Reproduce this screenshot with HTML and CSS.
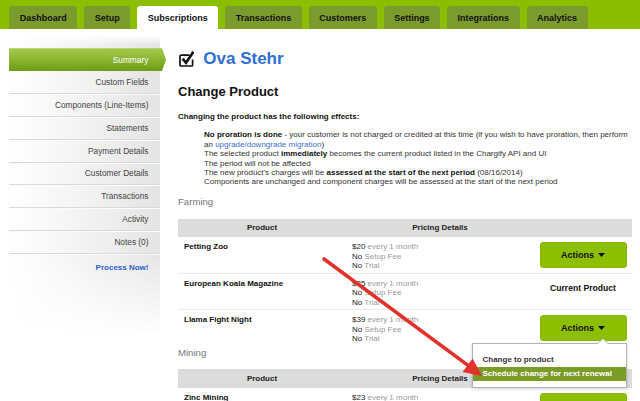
FILE: index.html
```html
<!DOCTYPE html>
<html lang="en">
<head>
<meta charset="utf-8">
<title>Change Product</title>
<link rel="stylesheet" href="styles.css">
</head>
<body>
<nav class="tabs">
  <a class="tab">Dashboard</a>
  <a class="tab">Setup</a>
  <a class="tab active">Subscriptions</a>
  <a class="tab">Transactions</a>
  <a class="tab">Customers</a>
  <a class="tab">Settings</a>
  <a class="tab">Integrations</a>
  <a class="tab">Analytics</a>
</nav>
<div class="layout">
  <aside class="sidebar">
    <ul class="side-nav">
      <li class="side-item active">Summary</li>
      <li class="side-item">Custom Fields</li>
      <li class="side-item">Components (Line-Items)</li>
      <li class="side-item">Statements</li>
      <li class="side-item">Payment Details</li>
      <li class="side-item">Customer Details</li>
      <li class="side-item">Transactions</li>
      <li class="side-item">Activity</li>
      <li class="side-item">Notes (0)</li>
      <li class="side-item process">Process Now!</li>
    </ul>
  </aside>
  <main class="content">
    <h1 class="customer">
      <svg class="check-icon" width="16" height="16" viewBox="0 0 16 16">
        <path d="M11.5 4.2H3a1 1 0 0 0-1 1V14a1 1 0 0 0 1 1h10.6a1 1 0 0 0 1-1V8.5" fill="none" stroke="#111" stroke-width="1.7"/>
        <path d="M4.6 7.6 L8 11.8 L15.4 0.8" fill="none" stroke="#111" stroke-width="2.6" stroke-linejoin="miter"/>
      </svg>
      <span>Ova Stehr</span>
    </h1>
    <h2 class="section-title">Change Product</h2>
    <p class="intro">Changing the product has the following effects:</p>
    <div class="effects">
      <div class="effect"><b>No proration is done</b> - your customer is not charged or credited at this time (if you wish to have proration, then perform<br>an <a class="link">upgrade/downgrade migration</a>)</div>
      <div class="effect">The selected product <b>immediately</b> becomes the current product listed in the Chargify API and UI</div>
      <div class="effect">The period will not be affected</div>
      <div class="effect">The new product's charges will be <b>assessed at the start of the next period</b> (08/16/2014)</div>
      <div class="effect">Components are unchanged and component charges will be assessed at the start of the next period</div>
    </div>

    <h3 class="family">Farming</h3>
    <table class="products">
      <colgroup><col class="col-product"><col class="col-pricing"><col class="col-actions"></colgroup>
      <thead>
        <tr class="head-row"><th>Product</th><th>Pricing Details</th><th></th></tr>
      </thead>
      <tbody>
        <tr class="row">
          <td class="name">Petting Zoo</td>
          <td class="pricing">
            <div><span class="val">$20</span> every 1 month</div>
            <div><span class="val">No</span> Setup Fee</div>
            <div><span class="val">No</span> Trial</div>
          </td>
          <td class="actions-cell"><span class="actions-wrap"><button class="btn">Actions <svg class="caret" width="7" height="4" viewBox="0 0 7 4"><path d="M0 0H7L3.5 4Z" fill="#111"/></svg></button></span></td>
        </tr>
        <tr class="row">
          <td class="name">European Koala Magazine</td>
          <td class="pricing">
            <div><span class="val">$35</span> every 1 month</div>
            <div><span class="val">No</span> Setup Fee</div>
            <div><span class="val">No</span> Trial</div>
          </td>
          <td class="actions-cell current">Current Product</td>
        </tr>
        <tr class="row last">
          <td class="name">Llama Fight Night</td>
          <td class="pricing">
            <div><span class="val">$39</span> every 1 month</div>
            <div><span class="val">No</span> Setup Fee</div>
            <div><span class="val">No</span> Trial</div>
          </td>
          <td class="actions-cell">
            <span class="actions-wrap">
              <button class="btn">Actions <svg class="caret" width="7" height="4" viewBox="0 0 7 4"><path d="M0 0H7L3.5 4Z" fill="#111"/></svg></button>
              <ul class="menu">
                <li class="menu-item">Change to product</li>
                <li class="menu-item selected">Schedule change for next renewal</li>
              </ul>
            </span>
          </td>
        </tr>
      </tbody>
    </table>

    <h3 class="family mining">Mining</h3>
    <table class="products">
      <colgroup><col class="col-product"><col class="col-pricing"><col class="col-actions"></colgroup>
      <thead>
        <tr class="head-row"><th>Product</th><th>Pricing Details</th><th></th></tr>
      </thead>
      <tbody>
        <tr class="row">
          <td class="name">Zinc Mining</td>
          <td class="pricing">
            <div><span class="val">$23</span> every 1 month</div>
          </td>
          <td class="actions-cell"><span class="actions-wrap"><button class="btn">Actions <svg class="caret" width="7" height="4" viewBox="0 0 7 4"><path d="M0 0H7L3.5 4Z" fill="#111"/></svg></button></span></td>
        </tr>
      </tbody>
    </table>
  </main>
</div>
<svg class="annotation" width="640" height="401" viewBox="0 0 640 401">
  <line x1="324" y1="259" x2="468" y2="365.4" stroke="#e3302a" stroke-width="3.6" stroke-linecap="round"/>
  <polygon points="482,376 462.6,372 472.6,358.6" fill="#e3302a"/>
</svg>
</body>
</html>
```

FILE: styles.css
```css
* { box-sizing: border-box; margin: 0; padding: 0; }
html, body { background: #fff; }
body {
  width: 640px;
  height: 401px;
  overflow: hidden;
  position: relative;
  font-family: "Liberation Sans", Arial, Helvetica, sans-serif;
  color: #333;
}

/* top tabs */
.tabs {
  display: flex;
  gap: 7.2px;
  height: 29px;
  padding: 6px 0 0 9.3px;
  background: #8cbe00;
}
.tab {
  display: flex;
  align-items: center;
  height: 23px;
  padding: 0 10.4px;
  background: #7b9c2c;
  border-radius: 3px 3px 0 0;
  font-size: 9px;
  font-weight: bold;
  color: #111;
}
.tab.active { background: #fff; }

.layout { display: flex; align-items: flex-start; }

/* sidebar */
.sidebar {
  width: 151px;
  height: 300px;
  margin: 6px 0 0 9px;
  padding-top: 13.3px;
  background:
    linear-gradient(to bottom, #fff 0, rgba(255,255,255,0) 10px, rgba(255,255,255,0) 72%, #fff 100%),
    linear-gradient(to right, #fff 0, #f4f4f4 45%, #e4e4e4 100%);
}
.side-nav { list-style: none; }
.side-item {
  display: flex;
  align-items: center;
  justify-content: flex-end;
  height: 22.9px;
  padding-right: 11.5px;
  font-size: 8.3px;
  color: #444;
  border-bottom: 1px solid #dadada;
  box-shadow: 0 1px 0 #fbfbfb;
}
.side-item.active {
  height: 22.7px;
  margin-right: -6px;
  padding-right: 17.7px;
  border-bottom: none;
  box-shadow: none;
  color: #fff;
  background: linear-gradient(to bottom, #a6cb4f 0, #8ab530 50%, #6f9a13 100%);
  clip-path: polygon(0 0, calc(100% - 4px) 0, 100% 50%, calc(100% - 4px) 100%, 0 100%);
}
.side-item.process {
  border-bottom: none;
  box-shadow: none;
  font-size: 8px;
  font-weight: bold;
  color: #2b5fcc;
  height: 26px;
}

/* content */
.content { margin-left: 18px; width: 454px; }
.customer {
  display: flex;
  align-items: center;
  gap: 9.3px;
  margin-top: 20px;
  font-size: 17px;
  line-height: 20px;
  color: #2f6fd2;
}
.check-icon { flex: none; }
.section-title {
  margin-top: 14.5px;
  font-size: 13px;
  line-height: 16px;
  color: #111;
}
.intro {
  margin-top: 12.5px;
  font-size: 8px;
  line-height: 10px;
  font-weight: bold;
  color: #111;
}
.effects {
  margin: 8.3px 0 0 26px;
  font-size: 8px;
  line-height: 9.4px;
  color: #333;
  white-space: nowrap;
}
.effects b { color: #111; }
.link { color: #3b6fd0; }

.family {
  margin-top: 9.3px;
  font-size: 9.6px;
  line-height: 12px;
  font-weight: normal;
  color: #777;
}
.family.mining { margin-top: 0.5px; }

.products {
  width: 454px;
  margin-top: 10.5px;
  border-collapse: collapse;
  table-layout: fixed;
}
.col-product { width: 168px; }
.col-pricing { width: 188px; }
.col-actions { width: 98px; }
.head-row { height: 18.6px; background: #dcdcdc; }
.head-row th {
  padding: 0;
  font-size: 8px;
  font-weight: bold;
  color: #222;
  text-align: center;
}
.row { height: 36.3px; border-bottom: 1px solid #ebebeb; }
.row.last { border-bottom: none; }
.row td {
  vertical-align: top;
  padding: 5px 6px 0;
  font-size: 8px;
  line-height: 9.5px;
}
.name { font-weight: bold; color: #111; }
.pricing { color: #9a9a9a; }
.pricing .val { color: #222; }
.row td.actions-cell { padding: 5px 0 0; text-align: center; }
.row td.current {
  padding-top: 9px;
  font-size: 8.6px;
  line-height: 10px;
  font-weight: bold;
  color: #111;
}
.actions-wrap { position: relative; display: inline-block; vertical-align: top; }
.btn {
  display: inline-flex;
  align-items: center;
  justify-content: center;
  gap: 4px;
  width: 87px;
  height: 25.4px;
  border: 1px solid #88b900;
  border-radius: 3px;
  background: #8cbf00;
  font-family: inherit;
  font-size: 9px;
  font-weight: bold;
  color: #111;
}

/* dropdown */
.menu {
  position: absolute;
  top: calc(100% + 2.5px);
  right: 0;
  z-index: 5;
  width: 155px;
  padding: 9px 0 6px;
  list-style: none;
  text-align: left;
  background: #fff;
  border: 1px solid #b3b3b3;
  box-shadow: 0 1px 3px rgba(0,0,0,0.18);
}
.menu::before,
.menu::after {
  content: "";
  position: absolute;
  border-style: solid;
  border-color: transparent;
}
.menu::before {
  top: -6px;
  right: 17px;
  border-width: 0 6px 6px;
  border-bottom-color: #b3b3b3;
}
.menu::after {
  top: -5px;
  right: 18px;
  border-width: 0 5px 5px;
  border-bottom-color: #fff;
}
.menu-item {
  height: 14px;
  padding: 0 10px;
  font-size: 8px;
  line-height: 14px;
  font-weight: bold;
  color: #333;
  white-space: nowrap;
}
.menu-item.selected { background: #7b9b27; color: #fff; }

.annotation {
  position: absolute;
  left: 0;
  top: 0;
  z-index: 10;
  pointer-events: none;
}
```
